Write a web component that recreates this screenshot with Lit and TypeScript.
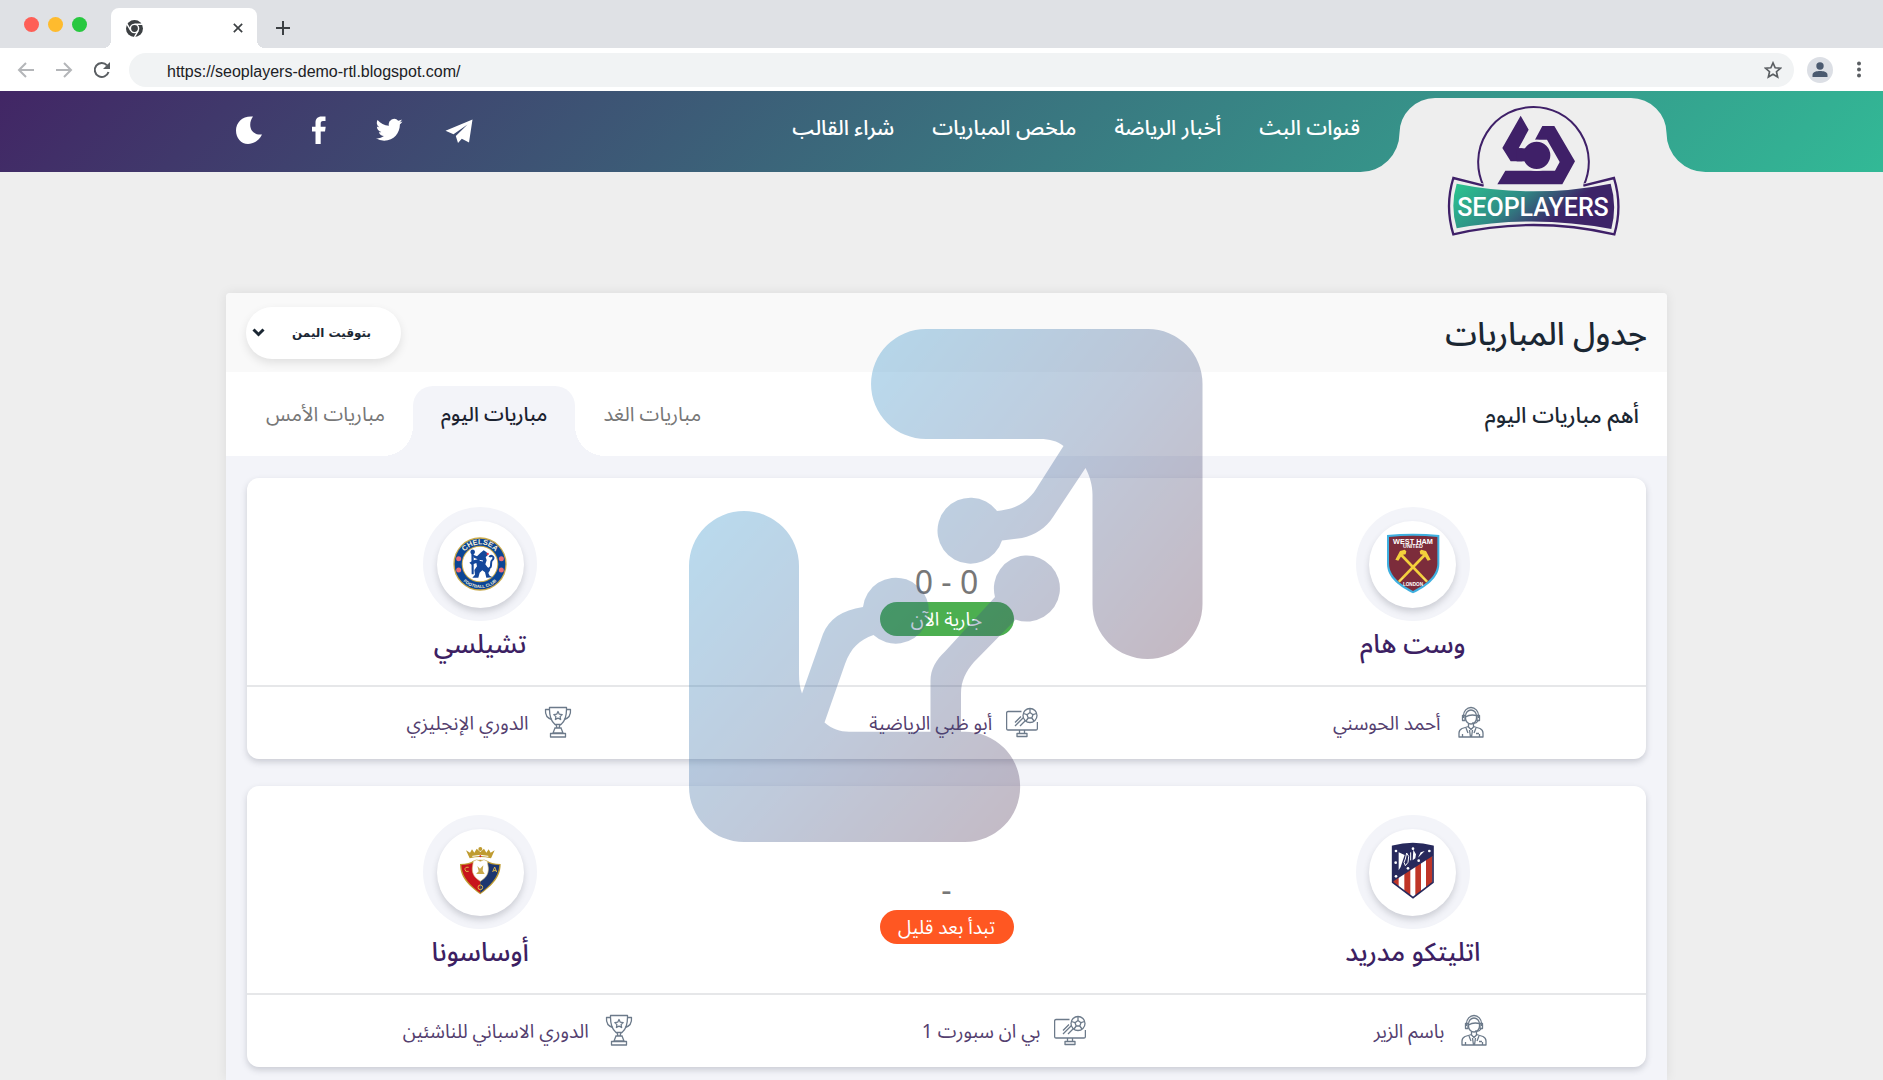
import { LitElement, html, css, svg } from "lit";
import { customElement, property } from "lit/decorators.js";

interface Match {
  home: string;
  homeCrest: string;
  away: string;
  awayCrest: string;
  score: string;
  status: string;
  live: boolean;
  commentator: string;
  channel: string;
  league: string;
}

const matches: Match[] = [
  {
    home: "وست هام",
    homeCrest: "westham",
    away: "تشيلسي",
    awayCrest: "chelsea",
    score: "0 - 0",
    status: "جارية الآن",
    live: true,
    commentator: "أحمد الحوسني",
    channel: "أبو ظبي الرياضية",
    league: "الدوري الإنجليزي",
  },
  {
    home: "اتليتكو مدريد",
    homeCrest: "atletico",
    away: "أوساسونا",
    awayCrest: "osasuna",
    score: "-",
    status: "تبدأ بعد قليل",
    live: false,
    commentator: "باسم الزير",
    channel: "بي ان سبورت 1",
    league: "الدوري الاسباني للناشئين",
  },
];

const crests: Record<string, unknown> = {
  chelsea: svg`
    <circle cx="81" cy="81" r="80" fill="#c9a94a"/>
    <circle cx="81" cy="81" r="76" fill="#0b4595"/>
    <circle cx="81" cy="81" r="55" fill="#c9a94a"/>
    <circle cx="81" cy="81" r="52" fill="#fff"/>
    <path id="arc-top" d="M22 81 A59 59 0 0 1 140 81" fill="none"/>
    <path id="arc-low" d="M9 81 A72 72 0 0 0 153 81" fill="none"/>
    <text font-family="Liberation Sans" font-weight="700" font-size="22" fill="#f6f0d8" text-anchor="middle"><textPath href="#arc-top" startOffset="50%">CHELSEA</textPath></text>
    <text font-family="Liberation Sans" font-weight="700" font-size="13" fill="#f6f0d8" text-anchor="middle"><textPath href="#arc-low" startOffset="50%">FOOTBALL CLUB</textPath></text>
    <g fill="#ee6a74"><circle cx="17" cy="65" r="7.500"/><circle cx="17" cy="99" r="7.500"/><circle cx="145" cy="65" r="7.500"/><circle cx="145" cy="99" r="7.500"/></g>
    <g fill="#14479a">
      <path d="M82 48 L92 40 L101 46 L104 55 L98 60 L101 70 L97 82 L103 90 L112 98 L106 108 L110 116 L119 121 L100 122 L96 106 L88 100 L80 107 L76 122 L58 122 L66 113 L64 99 L72 88 L70 78 L56 83 L49 77 L62 70 L74 67 L63 62 L57 52 L72 58 Z"/>
      <path d="M55 38 L62 38 L62 112 L56 112 Z"/>
      <circle cx="59" cy="45" r="7"/>
      <path d="M100 96 C124 94 108 76 118 69 C128 60 114 53 109 60" fill="none" stroke="#14479a" stroke-width="6"/>
      <path d="M103 76 L111 84 M80 70 L90 72" stroke="#fff" stroke-width="3"/>
    </g>
    <circle cx="104" cy="51" r="3.500" fill="#e8394a"/>`,
  westham: svg`
    <path d="M3 -6 Q81 -14 160 -6 V80 C160 124 118 150 81 169 C44 150 3 124 3 80 Z" fill="#3fb0e0"/>
    <path d="M9 0 Q81 -8 154 0 V79 C154 119 116 144 81 162 C46 144 9 119 9 79 Z" fill="#7c2c3b"/>
    <g fill="#fff" font-family="Liberation Sans" font-weight="700" text-anchor="middle">
      <text x="81" y="20" font-size="22">WEST HAM</text>
      <text x="81" y="34" font-size="16">UNITED</text>
      <text x="81" y="148" font-size="14">LONDON</text>
    </g>
    <g stroke="#f3d03c" stroke-width="8" fill="none"><path d="M46 54 L123 134"/><path d="M116 54 L39 134"/></g>
    <g fill="#f3d03c"><path d="M28 68 L42 42 L56 38 L61 43 L59 52 L48 54 L37 71 Z"/><path d="M134 68 L120 42 L106 38 L101 43 L103 52 L114 54 L125 71 Z"/></g>
    <path d="M39 134 L51 122 M123 134 L111 122" stroke="#f9e79a" stroke-width="3"/>`,
  atletico: svg`
    <clipPath id="am"><path d="M20 4 Q81 -12 141 4 V112 L81 158 L20 112 Z"/></clipPath>
    <g clip-path="url(#am)">
      <path d="M20 -10 H141 V160 H20 Z" fill="#fff"/>
      <path d="M20 70 H38 V160 H20 Z M55 60 H73 V160 H55 Z M88 40 H105 V160 H88 Z M120 20 H139 V160 H120 Z" fill="#bf3528"/>
      <path d="M20 -10 H141 V32 L20 110 Z" fill="#27295c"/>
    </g>
    <path d="M20 4 Q81 -12 141 4 V112 L81 158 L20 112 Z" fill="none" stroke="#27295c" stroke-width="5"/>
    <path d="M38 76 V22 L56 30 L44 66 Z M104 22 L116 18 L96 38 Z M82 14 L90 28 L88 40 L80 46 Z" fill="#fff"/>
    <path d="M62 24 L68 34 L66 52 L58 62 L54 52 L58 42 Z M74 22 L74 46" stroke="#fff" stroke-width="3" fill="none"/>
    <g fill="#fff"><circle cx="30" cy="18" r="4"/><circle cx="81" cy="11" r="4"/><circle cx="130" cy="18" r="4"/><circle cx="29" cy="53" r="4"/><circle cx="30" cy="94" r="4"/><circle cx="98" cy="47" r="4"/><circle cx="66" cy="70" r="4"/></g>`,
  osasuna: svg`
    <g transform="translate(1 3)">
    <path d="M38 13 L50 20 L56 10 L63 20 L70 8 L81 18 L92 8 L99 20 L106 10 L112 20 L124 13 L113 37 Q81 29 49 37 Z" fill="#bf9b30"/>
    <circle cx="81" cy="9" r="6" fill="#bf9b30"/>
    <path d="M57 31 Q81 25 105 31" stroke="#fff" stroke-width="3" fill="none"/>
    <circle cx="81" cy="31" r="3" fill="#d4232b"/>
    <path d="M20 54 Q50 53 60 44 Q81 38 102 44 Q112 53 142 54 C142 100 108 124 81 145 C54 124 20 100 20 54 Z" fill="#bf9b30"/>
    <path d="M24 57 Q50 57 62 48 L81 45 V141 C56 121 26 98 24 57 Z" fill="#c8141c"/>
    <path d="M138 57 Q112 57 100 48 L81 45 V141 C106 121 136 98 138 57 Z" fill="#1c3670"/>
    <path d="M60 46 L70 41 L81 46 L92 41 L102 46 L105 66 C106 86 96 96 81 106 C66 96 56 86 57 66 Z" fill="#fff" stroke="#d8c07a" stroke-width="2"/>
    <path d="M72 60 L80 68 L90 58 L88 74 L94 84 H68 L76 76 Z" fill="#c9a94a"/>
    <g fill="none" stroke="#e0b84a" stroke-width="3"><path d="M46 64 Q34 62 35 71 Q36 79 46 76"/><path d="M118 78 L124 63 L130 78 M120 74 H128"/><circle cx="81" cy="124" r="7"/></g>
    </g>`,
};

const footIcons: Record<string, unknown> = {
  commentator: svg`
    <path d="M8.500 12 V9.500 A7.500 8 0 0 1 23.500 9.500 V12"/>
    <path d="M10.500 10 A5.500 6 0 0 1 21.500 10 V12 A5.500 6 0 0 1 10.500 12 Z"/>
    <path d="M7.500 9.500 h2.500 v5 h-2.500 z M22 9.500 h2.500 v5 h-2.500 z"/>
    <path d="M10.500 11 Q15 8 21.500 9.500 M23 15 Q21 18 17 17"/>
    <path d="M13.500 18 V21 L16 23.500 L18.500 21 V18"/>
    <path d="M13.500 20.500 L7 22.500 Q4 24 4 27 V31 H28 V27 Q28 24 25 22.500 L18.500 20.500"/>
    <path d="M14.500 24 L15.500 31 M17.500 24 L16.500 31 M11 22 L13 27 M21 22 L19 27 M7.500 28 V31 M24.500 28 V31 M21 27.500 h3"/>`,
  channel: svg`
    <path d="M15.500 5.500 H2 Q.600 5.500 .600 7 V22.500 Q.600 24 2 24 H30 Q31.400 24 31.400 22.500 V16"/>
    <path d="M13.500 24 V27.500 M18.500 24 V27.500 M11 27.500 H21 V30.500 H11 Z"/>
    <circle cx="24" cy="9.500" r="7"/>
    <path d="M24 6.500 L27 8.700 L25.800 12 H22.200 L21 8.700 Z M24 6.500 V2.500 M27 8.700 L30.500 7.500 M25.800 12 L28 15 M22.200 12 L20 15 M21 8.700 L17.500 7.500"/>
    <path d="M9 20 L17.500 11.500 M14 20 L19.500 14.500 M9 16.500 L15 10.500"/>`,
  league: svg`
    <path d="M7.500 1.500 H24.500 V3.500 C24.500 12 22 16 19 18.500 H13 C10 16 7.500 12 7.500 3.500 Z"/>
    <path d="M7.500 3.500 H3.500 C3 9 6 12.500 10 13.500 M24.500 3.500 H28.500 C29 9 26 12.500 22 13.500"/>
    <path d="M16 5.500 L17.300 8.200 L20.200 8.600 L18.100 10.600 L18.600 13.500 L16 12.100 L13.400 13.500 L13.900 10.600 L11.800 8.600 L14.700 8.200 Z"/>
    <path d="M14 18.500 L15 22 H17 L18 18.500 M12.500 22 H19.500 M13 22 L11 27 H21 L19 22 M8.500 27.500 H23.500 V31 H8.500 Z"/>`,
};

@customElement("browser-bar")
class BrowserBar extends LitElement {
  static styles = css`
    :host { display: block; direction: ltr; background: #fff; font-family: "Liberation Sans", Arial, sans-serif; }
    button { border: 0; background: none; padding: 0; display: grid; place-items: center; color: #3c4043; }
    .strip { display: flex; align-items: flex-end; height: 48px; background: #dfe1e5; padding-left: 24px; }
    .dots { display: flex; gap: 9px; height: 48px; align-items: center; width: 87px; }
    .dot { width: 15px; height: 15px; border-radius: 50%; }
    .red { background: #fe5f57; }
    .yellow { background: #febb2e; }
    .green { background: #28c840; }
    .tab { position: relative; display: flex; align-items: center; justify-content: space-between; width: 146px; height: 40px; box-sizing: border-box; padding: 0 14px 0 15px; background: #fff; border-radius: 8px 8px 0 0; }
    .tab::before, .tab::after { content: ""; position: absolute; bottom: 0; width: 8px; height: 8px; }
    .tab::before { right: 100%; background: radial-gradient(circle at 0 0, transparent 8px, #fff 8px); }
    .tab::after { left: 100%; background: radial-gradient(circle at 100% 0, transparent 8px, #fff 8px); }
    .plus { height: 40px; margin-left: 19px; }
    .tools { display: flex; align-items: center; height: 43px; padding: 0 15px 0 17px; box-sizing: border-box; }
    .nav { display: flex; gap: 20px; width: 112px; }
    .nav .muted { color: #b4b6b9; }
    .address { flex: 1; display: flex; align-items: center; height: 34px; background: #f1f3f4; border-radius: 17px; padding: 0 12px 0 38px; }
    .url { flex: 1; border: 0; background: none; padding: 4px 0 0; font: 16px "Liberation Sans", Arial, sans-serif; color: #202124; outline: 0; }
    .avatar { width: 26px; height: 26px; border-radius: 50%; background: #dcdfe5; margin-left: 13px; }
    .more { margin-left: 17px; width: 18px; }
  `;
  render() {
    return html`
      <div class="strip">
        <div class="dots"><span class="dot red"></span><span class="dot yellow"></span><span class="dot green"></span></div>
        <div class="tab">
          <svg width="17" height="17" viewBox="0 0 24 24"><circle cx="12" cy="12" r="12" fill="#3c4043"/><circle cx="12" cy="12" r="5.800" fill="none" stroke="#fff" stroke-width="2"/><path d="M12 6 H23 M6.800 15 L1.500 5.800 M17.200 15 L12 24" stroke="#fff" stroke-width="2"/></svg>
          <button aria-label="Close tab"><svg width="10" height="10" viewBox="0 0 12 12" stroke="currentColor" stroke-width="2"><path d="M1 1 L11 11 M11 1 L1 11"/></svg></button>
        </div>
        <button class="plus" aria-label="New tab"><svg width="14" height="14" viewBox="0 0 14 14" stroke="currentColor" stroke-width="2"><path d="M7 0 V14 M0 7 H14"/></svg></button>
      </div>
      <div class="tools">
        <div class="nav">
          <button class="muted" aria-label="Back"><svg width="18" height="18" viewBox="0 0 18 18" fill="none" stroke="currentColor" stroke-width="2"><path d="M17 9 H3 M9 2 L2 9 L9 16"/></svg></button>
          <button class="muted" aria-label="Forward"><svg width="18" height="18" viewBox="0 0 18 18" fill="none" stroke="currentColor" stroke-width="2"><path d="M1 9 H15 M9 2 L16 9 L9 16"/></svg></button>
          <button aria-label="Reload"><svg width="18" height="18" viewBox="0 0 18 18" fill="none" stroke="#5a5e62" stroke-width="2"><path d="M15.500 11 A7 7 0 1 1 14 4.300"/><path d="M17 1 V8 H10 Z" fill="#5a5e62" stroke="none"/></svg></button>
        </div>
        <div class="address">
          <input class="url" aria-label="Address" value="https://seoplayers-demo-rtl.blogspot.com/" />
          <button aria-label="Bookmark"><svg width="18" height="18" viewBox="0 0 24 24" fill="none" stroke="#5a5e62" stroke-width="2.200"><path d="M12 2.500 L14.900 9 L22 9.600 L16.600 14.300 L18.200 21.300 L12 17.600 L5.800 21.300 L7.400 14.300 L2 9.600 L9.100 9 Z"/></svg></button>
        </div>
        <button class="avatar" aria-label="Profile"><svg width="16" height="16" viewBox="0 0 16 16" fill="#4b5a70"><circle cx="8" cy="4" r="3.700"/><path d="M.500 15 V13 C.500 9.500 5 9 8 9 C11 9 15.500 9.500 15.500 13 V15 Z"/></svg></button>
        <button class="more" aria-label="Menu"><svg width="4" height="17" viewBox="0 0 4 17" fill="#5a5e62"><circle cx="2" cy="2.500" r="2"/><circle cx="2" cy="8.500" r="2"/><circle cx="2" cy="14.500" r="2"/></svg></button>
      </div>`;
  }
}

@customElement("site-header")
class SiteHeader extends LitElement {
  static styles = css`
    :host { display: block; }
    .bar { display: flex; align-items: center; box-sizing: border-box; height: 81px; padding-inline: 176px 235px; background: linear-gradient(135deg, #422665, #32b996); }
    .brand { position: relative; width: 347px; height: 81px; flex: none; }
    .brand svg { position: absolute; top: 0; left: 0; overflow: visible; }
    nav { display: flex; gap: 38px; padding-bottom: 9px; }
    a { color: #fff; text-decoration: none; }
    nav a { font-size: 21px; font-weight: 500; line-height: 32px; white-space: nowrap; }
    .social { display: flex; gap: 42px; margin-right: auto; direction: ltr; padding-bottom: 3px; }
    .social a, .social button { display: block; width: 28px; height: 28px; padding: 0; border: 0; background: none; color: #fff; }
    .social svg { display: block; fill: currentColor; }
  `;
  render() {
    return html`
      <header class="bar">
        <a class="brand" href="#" aria-label="SEOPLAYERS">
          <svg width="347" height="150" viewBox="0 0 347 150">
            <defs><linearGradient id="ribbon" x1="0" y1="0" x2="1" y2=".35"><stop offset="0.050" stop-color="#2cc08f"/><stop offset=".45" stop-color="#2f8b85"/><stop offset=".8" stop-color="#3d2468"/></linearGradient></defs>
            <path d="M0 82 V81 A39 39 0 0 0 39.500 42 A36 35 0 0 1 75 7 H271 A36 35 0 0 1 306.500 42 A39 39 0 0 0 346 81 V82 Z" fill="#eee"/>
            <g transform="translate(10 -12) scale(.33333)">
              <path d="M341 322 A166 166 0 1 1 640 322" fill="none" stroke="#3f2068" stroke-width="6"/>
              <path d="M452 110 L476 152 L446 208 H475 V247 H422 L397 207 Z" fill="#3f2068"/>
              <path d="M517 141 H553 L615 247 L577 316 H382 L406 275 H555 L569 249 L531 182 H495 Z" fill="#3f2068"/>
              <circle cx="500" cy="229" r="44" fill="#3f2068" stroke="#eee" stroke-width="6"/>
              <path d="M440 208 H480 V247 H440 Z" fill="#3f2068"/>
              <path d="M250 297 Q490 352 732 297 Q758 382 733 466 Q490 410 250 466 Q224 382 250 297 Z" fill="#eee"/>
              <path d="M341 320 L250 297 Q224 382 250 466 Q490 410 733 466 Q758 382 732 297 L640 320" fill="none" stroke="#3f2068" stroke-width="7"/>
              <path d="M260 314 Q490 360 722 314 Q742 380 724 450 Q490 406 260 448 Q240 380 260 314 Z" fill="url(#ribbon)"/>
              <text x="489" y="411" text-anchor="middle" font-family="Roboto, Liberation Sans, sans-serif" font-weight="500" font-size="75" fill="#fff">SEOPLAYERS</text>
            </g>
          </svg>
        </a>
        <nav>
          <a href="#">قنوات البث</a><a href="#">أخبار الرياضة</a><a href="#">ملخص المباريات</a><a href="#">شراء القالب</a>
        </nav>
        <div class="social">
          <button aria-label="الوضع الليلي"><svg width="28" height="28" viewBox="0 0 28 28"><path d="M18 .500 C12.500 8 15 19.500 27 18.500 C24 25 18 28 13 28 C6 28 1 22 1 14.500 C1 6 8 -.500 18 .500 Z"/></svg></button>
          <a href="#" aria-label="Facebook"><svg width="28" height="28" viewBox="0 0 28 28"><path d="M10.500 28 V15.500 H7 V10.700 H10.500 V6.500 C10.500 2.500 12.800 .400 16.500 .400 H20.500 V5 H18 C16.200 5 15.700 6 15.700 7.500 V10.700 H20.700 L20 15.500 H15.700 V28 Z"/></svg></a>
          <a href="#" aria-label="Twitter"><svg width="28" height="28" viewBox="0 0 24 24"><path d="M23.600 4.800 c-.8.400-1.700.600-2.700.700 1-.6 1.700-1.500 2-2.600 -.9.500-1.900.9-3 1.100 a4.700 4.700 0 0 0-8 4.300 C8 8.100 4.600 6.200 2.200 3.400 a4.700 4.700 0 0 0 1.500 6.300 c-.8 0-1.500-.2-2.100-.6 0 2.300 1.600 4.300 3.800 4.700 -.7.200-1.400.2-2.100.1 .6 1.900 2.300 3.200 4.400 3.300 A9.500 9.500 0 0 1 .7 19.100 13.300 13.300 0 0 0 7.900 21.200 c8.700 0 13.700-7.400 13.400-14 .9-.7 1.700-1.500 2.300-2.400z"/></svg></a>
          <a href="#" aria-label="Telegram"><svg width="28" height="28" viewBox="0 0 28 28"><path d="M27.500 3.500 L24 26.500 L16.800 22.800 L13 27 L10.800 20 L22.500 8.500 L8.500 18.300 L.500 14.800 Z"/></svg></a>
        </div>
      </header>`;
  }
}

@customElement("match-card")
class MatchCard extends LitElement {
  @property({ attribute: false }) match!: Match;
  static styles = css`
    :host { display: block; background: #fff; border-radius: 12px; box-shadow: 0 3px 6px rgba(60, 64, 80, 0.22); }
    .teams { display: grid; grid-template-columns: repeat(3, 1fr); padding: 29px 0 20px; }
    .team { display: flex; flex-direction: column; align-items: center; }
    .ring { display: grid; place-items: center; width: 114px; height: 114px; border-radius: 50%; background: #f3f4f9; }
    .disc { display: grid; place-items: center; width: 87px; height: 87px; border-radius: 50%; background: #fff; box-shadow: 0 4px 6px rgba(60, 64, 80, 0.2); }
    .disc svg { overflow: visible; }
    .name { margin: 0; font-size: 26px; font-weight: 500; line-height: 44px; color: #3d1f63; }
    .result { display: flex; flex-direction: column; align-items: center; padding-top: 55px; }
    .score { font-size: 32px; line-height: 40px; color: #777; direction: ltr; }
    .status { min-width: 134px; box-sizing: border-box; text-align: center; height: 34px; line-height: 34px; border-radius: 17px; font-size: 19px; color: #fff; background: #ff5722; }
    .live { background: #4caf50; }
    .meta { display: flex; justify-content: space-around; align-items: center; height: 72px; padding: 0 12px; border-top: 2px solid #e6e7e9; }
    .item { display: flex; align-items: center; gap: 14px; font-size: 19px; line-height: 28px; color: #54406f; white-space: nowrap; }
    .item svg { fill: none; stroke: #6c7a8a; stroke-width: 1.3; stroke-linejoin: round; margin-bottom: 2px; }
  `;
  private team(name: string, crest: string) {
    return html`<div class="team">
      <div class="ring"><div class="disc"><svg width="54" height="54" viewBox="0 0 162 162">${crests[crest]}</svg></div></div>
      <h3 class="name">${name}</h3>
    </div>`;
  }
  private item(kind: string, text: string) {
    return html`<div class="item"><svg width="32" height="32" viewBox="0 0 32 32">${footIcons[kind]}</svg><span>${text}</span></div>`;
  }
  render() {
    const m = this.match;
    return html`
      <div class="teams">
        ${this.team(m.home, m.homeCrest)}
        <div class="result"><span class="score">${m.score}</span><span class="status ${m.live ? "live" : ""}">${m.status}</span></div>
        ${this.team(m.away, m.awayCrest)}
      </div>
      <div class="meta">
        ${this.item("commentator", m.commentator)}${this.item("channel", m.channel)}${this.item("league", m.league)}
      </div>`;
  }
}

@customElement("app-root")
class AppRoot extends LitElement {
  static styles = css`
    :host { display: flex; flex-direction: column; min-height: 100vh; background: #eee; direction: rtl; font-family: "Noto Sans", "Noto Sans Arabic", "Open Sans", "DejaVu Sans", sans-serif; }
    .panel { position: relative; flex: 1; display: flex; flex-direction: column; margin: 121px 216px 0 226px; border-radius: 4px 4px 0 0; background: #f3f4f9; box-shadow: 0 0 12px rgba(0, 0, 0, 0.08); }
    .head { display: flex; align-items: center; justify-content: space-between; height: 79px; padding: 0 20px; background: #f9f9f9; border-radius: 4px 4px 0 0; }
    .title { margin: 0; font-size: 32px; font-weight: 500; line-height: 48px; color: #1b2733; }
    .zone { position: relative; display: flex; align-items: center; }
    .zone select { appearance: none; width: 155px; height: 52px; border: 0; border-radius: 26px; padding: 0 30px 0 40px; background: #fff; box-shadow: 0 4px 10px rgba(0, 0, 0, 0.1); font: 700 12px "DejaVu Sans", sans-serif; color: #1b2733; }
    .zone svg { position: absolute; left: 6px; pointer-events: none; }
    .tabs { display: flex; align-items: flex-end; justify-content: space-between; height: 84px; padding: 0 28px 0 12px; background: #fff; }
    .lead { margin: 0; padding-bottom: 14px; font-size: 22px; font-weight: 500; line-height: 56px; color: #1b2733; }
    .days { display: flex; }
    .day { position: relative; height: 70px; border: 0; padding: 0 28px 12px; background: none; border-radius: 20px 20px 0 0; font-family: inherit; font-size: 20px; color: #777; }
    .active { background: #f3f4f9; color: #1b2230; font-weight: 500; }
    .active::before, .active::after { content: ""; position: absolute; bottom: 0; width: 30px; height: 30px; }
    .active::before { left: 100%; background: radial-gradient(circle at 100% 0, transparent 30px, #f3f4f9 30px); }
    .active::after { right: 100%; background: radial-gradient(circle at 0 0, transparent 30px, #f3f4f9 30px); }
    .list { display: flex; flex-direction: column; gap: 27px; padding: 22px 21px 13px; }
    .mark { position: absolute; top: 36px; left: calc(50% - 258px); pointer-events: none; }
  `;
  render() {
    return html`
      <browser-bar></browser-bar>
      <site-header></site-header>
      <main class="panel">
        <div class="head">
          <h1 class="title">جدول المباريات</h1>
          <div class="zone">
            <select aria-label="التوقيت"><option>بتوقيت اليمن</option></select>
            <svg width="13" height="9" viewBox="0 0 13 9" fill="none" stroke="#1b2733" stroke-width="3"><path d="M1.500 1.500 L6.500 6.500 L11.500 1.500"/></svg>
          </div>
        </div>
        <div class="tabs">
          <h2 class="lead">أهم مباريات اليوم</h2>
          <div class="days">
            <button class="day">مباريات الغد</button><button class="day active">مباريات اليوم</button><button class="day">مباريات الأمس</button>
          </div>
        </div>
        <div class="list">${matches.map((m) => html`<match-card .match=${m}></match-card>`)}</div>
        <svg class="mark" width="514" height="514" viewBox="689 329 514 514" opacity=".32" aria-hidden="true">
          <defs><linearGradient id="fade" x1="0" y1=".1" x2="1" y2=".9"><stop offset="0" stop-color="#2a8cc8"/><stop offset=".5" stop-color="#3c5e93"/><stop offset="1" stop-color="#4a2848"/></linearGradient></defs>
          <path fill="url(#fade)" d="M926 329 H1148 A54.500 55 0 0 1 1202.500 384 V604 A55 55 0 0 1 1092.500 604 V495 C1092.500 485 1090 477 1085.500 468 L1053 517 C1046 528 1035 535 1022 538 L1002 540.500 A33 33 0 1 1 997 511 C1018 509 1030 500 1038 486 L1063.500 446 C1057 441 1050 439 1040 439 H926 A55 55 0 0 1 926 329 Z"/>
          <path fill="url(#fade)" d="M689 566 A55 55 0 0 1 799 566 V674 C799 682 800 688 802 693.500 L823 634 C829 619 842 610 863 607 A33 33 0 1 1 873.500 635 C859 640 851 648 845 664 L824.500 722.500 C832 729 840 731.700 849 731.700 H930.500 V681 C930.500 669 936 660 945 651.500 L995 597 A33 33 0 1 1 1015.700 619.600 L974 662 C966 671 961 681 961 693.500 V731.700 H965 A55 55 0 0 1 965 842 H744 A55 55 0 0 1 689 787 Z"/>
        </svg>
      </main>`;
  }
}
